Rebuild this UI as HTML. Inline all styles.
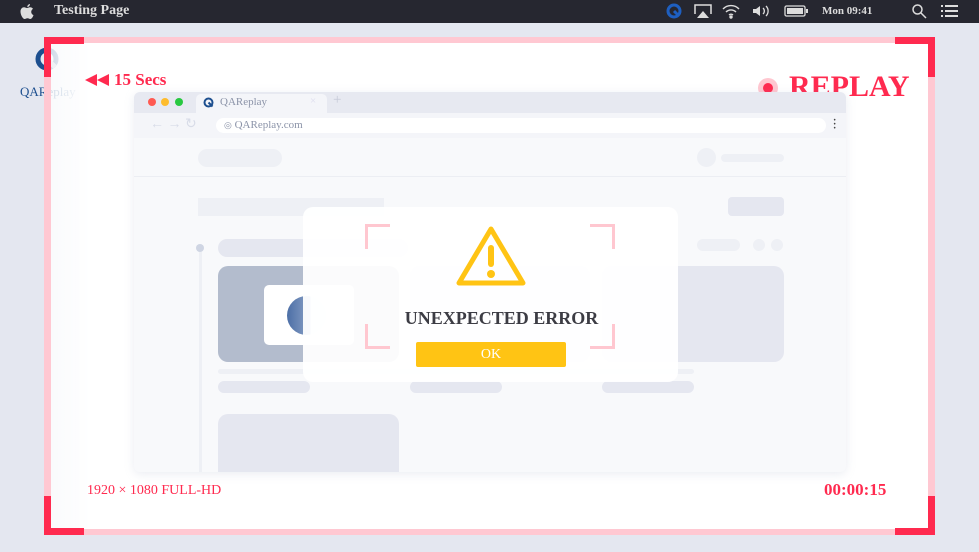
<!DOCTYPE html><html><head><style>
*{margin:0;padding:0;box-sizing:border-box}
body{width:979px;height:552px;overflow:hidden;background:#e4e7f0;font-family:"Liberation Serif",serif;position:relative}
.a{position:absolute}
.r{border-radius:10px}
</style></head><body>
<div class="a" style="left:0;top:0;width:979px;height:23px;background:#262730"></div>
<svg class="a" style="left:19px;top:3px" width="16" height="17" viewBox="0 0 16 17"><path d="M11 1c0 1.5-1.2 3-2.7 3C8.2 2.5 9.6 1.1 11 1zM8 5c1 0 2-.7 3-.7 1.2 0 2.3.6 3 1.6-2.6 1.5-2.2 5.2.5 6.2-.6 1.7-1.8 3.9-3.2 3.9-1.2 0-1.4-.7-2.8-.7s-1.8.7-2.9.7C4 16 1.5 12 1.5 8.6c0-2.8 1.8-4.3 3.5-4.3C6.1 4.3 7 5 8 5z" fill="#ddd"/></svg>
<div class="a" style="left:54px;top:3px;color:#ddd;font-weight:bold;font-size:14px">Testing Page</div>
<svg class="a" style="left:666px;top:3px" width="16" height="16"><circle cx="8" cy="8" r="6" fill="none" stroke="#1e5fc0" stroke-width="3"/><path d="M8 8l5 5" stroke="#1e5fc0" stroke-width="3"/></svg>
<svg class="a" style="left:693px;top:3px" width="20" height="16"><path d="M2 11V2h16v9" fill="none" stroke="#ddd" stroke-width="1.5"/><path d="M10 8l6 7H4z" fill="#ddd"/></svg>
<svg class="a" style="left:721px;top:3px" width="20" height="16" fill="none" stroke="#ddd" stroke-width="1.4"><path d="M2 6a11 11 0 0116 0M5 9a7 7 0 0110 0M8 12a3 3 0 014 0"/><circle cx="10" cy="14" r="1" fill="#ddd"/></svg>
<svg class="a" style="left:751px;top:3px" width="22" height="16"><path d="M2 6h3l4-3v10l-4-3H2z" fill="#ddd"/><path d="M12 5a4 4 0 010 6M15 3a7 7 0 010 10" fill="none" stroke="#ddd" stroke-width="1.3"/></svg>
<svg class="a" style="left:784px;top:4px" width="26" height="14"><rect x="1" y="2" width="20" height="10" rx="1.5" fill="none" stroke="#ddd" stroke-width="1.3"/><rect x="3" y="4" width="16" height="6" fill="#ddd"/><rect x="22" y="5" width="2" height="4" fill="#ddd"/></svg>
<div class="a" style="left:822px;top:5px;color:#ddd;font-size:11px;font-weight:bold">Mon 09:41</div>
<svg class="a" style="left:911px;top:3px" width="16" height="16" fill="none" stroke="#ddd" stroke-width="1.5"><circle cx="6.5" cy="6.5" r="4.5"/><path d="M10 10l5 5"/></svg>
<svg class="a" style="left:940px;top:4px" width="20" height="14" fill="#ddd"><rect x="1" y="1" width="2" height="2"/><rect x="5" y="1" width="13" height="2"/><rect x="1" y="6" width="2" height="2"/><rect x="5" y="6" width="13" height="2"/><rect x="1" y="11" width="2" height="2"/><rect x="5" y="11" width="13" height="2"/></svg>

<svg class="a" style="left:33px;top:43px" width="32" height="32"><circle cx="14" cy="16" r="9" fill="none" stroke="#1d4f8f" stroke-width="5"/><path d="M14 16l8 8" stroke="#b0bccd" stroke-width="5"/></svg>
<div class="a" style="left:20px;top:84px;color:#1d4f8f;font-size:13px">QAReplay</div>

<div class="a" style="left:44px;top:37px;width:891px;height:498px;border:7px solid rgba(255,190,202,.85);border-top-width:6px;border-bottom-width:6px;background:linear-gradient(90deg,rgba(255,255,255,.8),#fff 40px)"></div>
<div class="a" style="left:44px;top:37px;width:40px;height:7px;background:#ff2a4f"></div>
<div class="a" style="left:44px;top:37px;width:7px;height:40px;background:#ff2a4f"></div>
<div class="a" style="left:895px;top:37px;width:40px;height:7px;background:#ff2a4f"></div>
<div class="a" style="left:928px;top:37px;width:7px;height:40px;background:#ff2a4f"></div>
<div class="a" style="left:44px;top:528px;width:40px;height:7px;background:#ff2a4f"></div>
<div class="a" style="left:44px;top:496px;width:7px;height:39px;background:#ff2a4f"></div>
<div class="a" style="left:895px;top:528px;width:40px;height:7px;background:#ff2a4f"></div>
<div class="a" style="left:928px;top:496px;width:7px;height:39px;background:#ff2a4f"></div>

<svg class="a" style="left:85px;top:74px" width="26" height="12"><path d="M0 6l12-6v12zM12 6l12-6v12z" fill="#ff2a4f"/></svg>
<div class="a" style="left:114px;top:70px;color:#ff2a4f;font-size:17px;font-weight:bold">15 Secs</div>
<div class="a" style="left:758px;top:78px;width:20px;height:20px;border-radius:50%;background:#ffc7d0"></div>
<div class="a" style="left:763px;top:83px;width:10px;height:10px;border-radius:50%;background:#ff2a4f"></div>
<div class="a" style="left:789px;top:70px;color:#ff2a4f;font-size:30px;font-weight:bold">REPLAY</div>

<!-- browser -->
<div class="a" style="left:134px;top:92px;width:712px;height:380px;background:#f8f9fb;border-radius:6px;box-shadow:0 2px 10px rgba(150,160,190,.2);overflow:hidden">
 <div class="a" style="left:0;top:0;width:712px;height:21px;background:#e7e9f1"></div>
 <div class="a" style="left:14px;top:6px;width:8px;height:8px;border-radius:50%;background:#ff5a52"></div>
 <div class="a" style="left:27px;top:6px;width:8px;height:8px;border-radius:50%;background:#febc2e"></div>
 <div class="a" style="left:41px;top:6px;width:8px;height:8px;border-radius:50%;background:#28c840"></div>
 <div class="a" style="left:62px;top:2px;width:131px;height:19px;background:#f4f5f9;border-radius:5px 5px 0 0"></div>
 <svg class="a" style="left:69px;top:5px" width="11" height="11"><circle cx="5.5" cy="5.5" r="4" fill="none" stroke="#1d4f8f" stroke-width="2"/><path d="M5.5 5.5l4 4" stroke="#1d4f8f" stroke-width="2"/></svg>
 <div class="a" style="left:86px;top:4px;font-size:11px;color:#8b93a8">QAReplay</div>
 <div class="a" style="left:176px;top:3px;font-size:11px;color:#dde">×</div>
 <div class="a" style="left:199px;top:0px;font-size:15px;color:#c6cad8">+</div>
 <div class="a" style="left:0;top:21px;width:712px;height:25px;background:#f4f5f9"></div>
 <div class="a" style="left:16px;top:24px;font-size:14px;color:#d8dce8">← → ↻</div>
 <div class="a" style="left:82px;top:26px;width:610px;height:15px;background:#fff;border-radius:8px"></div>
 <div class="a" style="left:90px;top:27px;font-size:11px;color:#8b93a8"><span style="font-size:9px">◎</span> QAReplay.com</div>
 <div class="a" style="left:699px;top:27px;font-size:10px;color:#444;font-weight:bold;line-height:4px">·<br>·<br>·</div>
 <div class="a" style="left:0;top:84px;width:712px;height:1px;background:#eceef3"></div>
 <div class="a" style="left:64px;top:57px;width:84px;height:18px;border-radius:9px;background:#eef0f5"></div>
 <div class="a" style="left:563px;top:56px;width:19px;height:19px;border-radius:50%;background:#eef0f5"></div>
 <div class="a" style="left:587px;top:62px;width:63px;height:8px;border-radius:4px;background:#eef0f5"></div>
 <div class="a" style="left:64px;top:106px;width:186px;height:18px;background:#eef0f5"></div>
 <div class="a" style="left:594px;top:105px;width:56px;height:19px;border-radius:4px;background:#e5e7f0"></div>
 <div class="a" style="left:62px;top:152px;width:8px;height:8px;border-radius:50%;background:#cfd5e3"></div>
 <div class="a" style="left:65px;top:160px;width:3px;height:230px;background:#eef0f5"></div>
 <div class="a" style="left:84px;top:147px;width:190px;height:18px;border-radius:9px;background:#e5e7f0"></div>
 <div class="a" style="left:563px;top:147px;width:43px;height:12px;border-radius:6px;background:#eef0f5"></div>
 <div class="a" style="left:619px;top:147px;width:12px;height:12px;border-radius:50%;background:#eef0f5"></div>
 <div class="a" style="left:637px;top:147px;width:12px;height:12px;border-radius:50%;background:#eef0f5"></div>
 <div class="a r" style="left:84px;top:174px;width:181px;height:96px;background:#b3bccd"></div>
 <div class="a" style="left:130px;top:193px;width:90px;height:60px;border-radius:5px;background:#fff"></div>
 <div class="a" style="left:153px;top:204px;width:39px;height:39px;border-radius:50%;background:linear-gradient(90deg,#4c6fa6,#8aa0c6 60%,#eef0f5 60%)"></div>
 <div class="a r" style="left:276px;top:174px;width:180px;height:96px;background:#e5e7f0"></div>
 <div class="a r" style="left:468px;top:174px;width:182px;height:96px;background:#e5e7f0"></div>
 <div class="a" style="left:84px;top:277px;width:476px;height:5px;border-radius:3px;background:#eef0f5"></div>
 <div class="a" style="left:84px;top:289px;width:92px;height:12px;border-radius:6px;background:#e5e7f0"></div>
 <div class="a" style="left:276px;top:289px;width:92px;height:12px;border-radius:6px;background:#e5e7f0"></div>
 <div class="a" style="left:468px;top:289px;width:92px;height:12px;border-radius:6px;background:#e5e7f0"></div>
 <div class="a r" style="left:84px;top:322px;width:181px;height:70px;background:#e5e7f0"></div>
</div>

<!-- modal -->
<div class="a" style="left:303px;top:207px;width:375px;height:175px;border-radius:10px;background:rgba(255,255,255,.94)"></div>
<div class="a" style="left:365px;top:224px;width:25px;height:25px;border-left:3px solid #ffc7d0;border-top:3px solid #ffc7d0"></div>
<div class="a" style="left:590px;top:224px;width:25px;height:25px;border-right:3px solid #ffc7d0;border-top:3px solid #ffc7d0"></div>
<div class="a" style="left:365px;top:324px;width:25px;height:25px;border-left:3px solid #ffc7d0;border-bottom:3px solid #ffc7d0"></div>
<div class="a" style="left:590px;top:324px;width:25px;height:25px;border-right:3px solid #ffc7d0;border-bottom:3px solid #ffc7d0"></div>
<svg class="a" style="left:454px;top:223px" width="74" height="68"><path d="M37 6L5 60h64z" fill="none" stroke="#ffc414" stroke-width="5" stroke-linejoin="round"/><rect x="34" y="22" width="6" height="22" rx="3" fill="#ffc414"/><circle cx="37" cy="51" r="4" fill="#ffc414"/></svg>
<div class="a" style="left:314px;top:308px;width:375px;text-align:center;font-size:18px;font-weight:bold;color:#3c3c44">UNEXPECTED ERROR</div>
<div class="a" style="left:416px;top:342px;width:150px;height:25px;background:#ffc414;border-radius:2px;color:#fff;text-align:center;font-size:14px;line-height:25px">OK</div>

<div class="a" style="left:87px;top:483px;color:#ff2a4f;font-size:14px">1920 × 1080 FULL-HD</div>
<div class="a" style="left:824px;top:480px;color:#ff2a4f;font-size:17px;font-weight:bold">00:00:15</div>
</body></html>
